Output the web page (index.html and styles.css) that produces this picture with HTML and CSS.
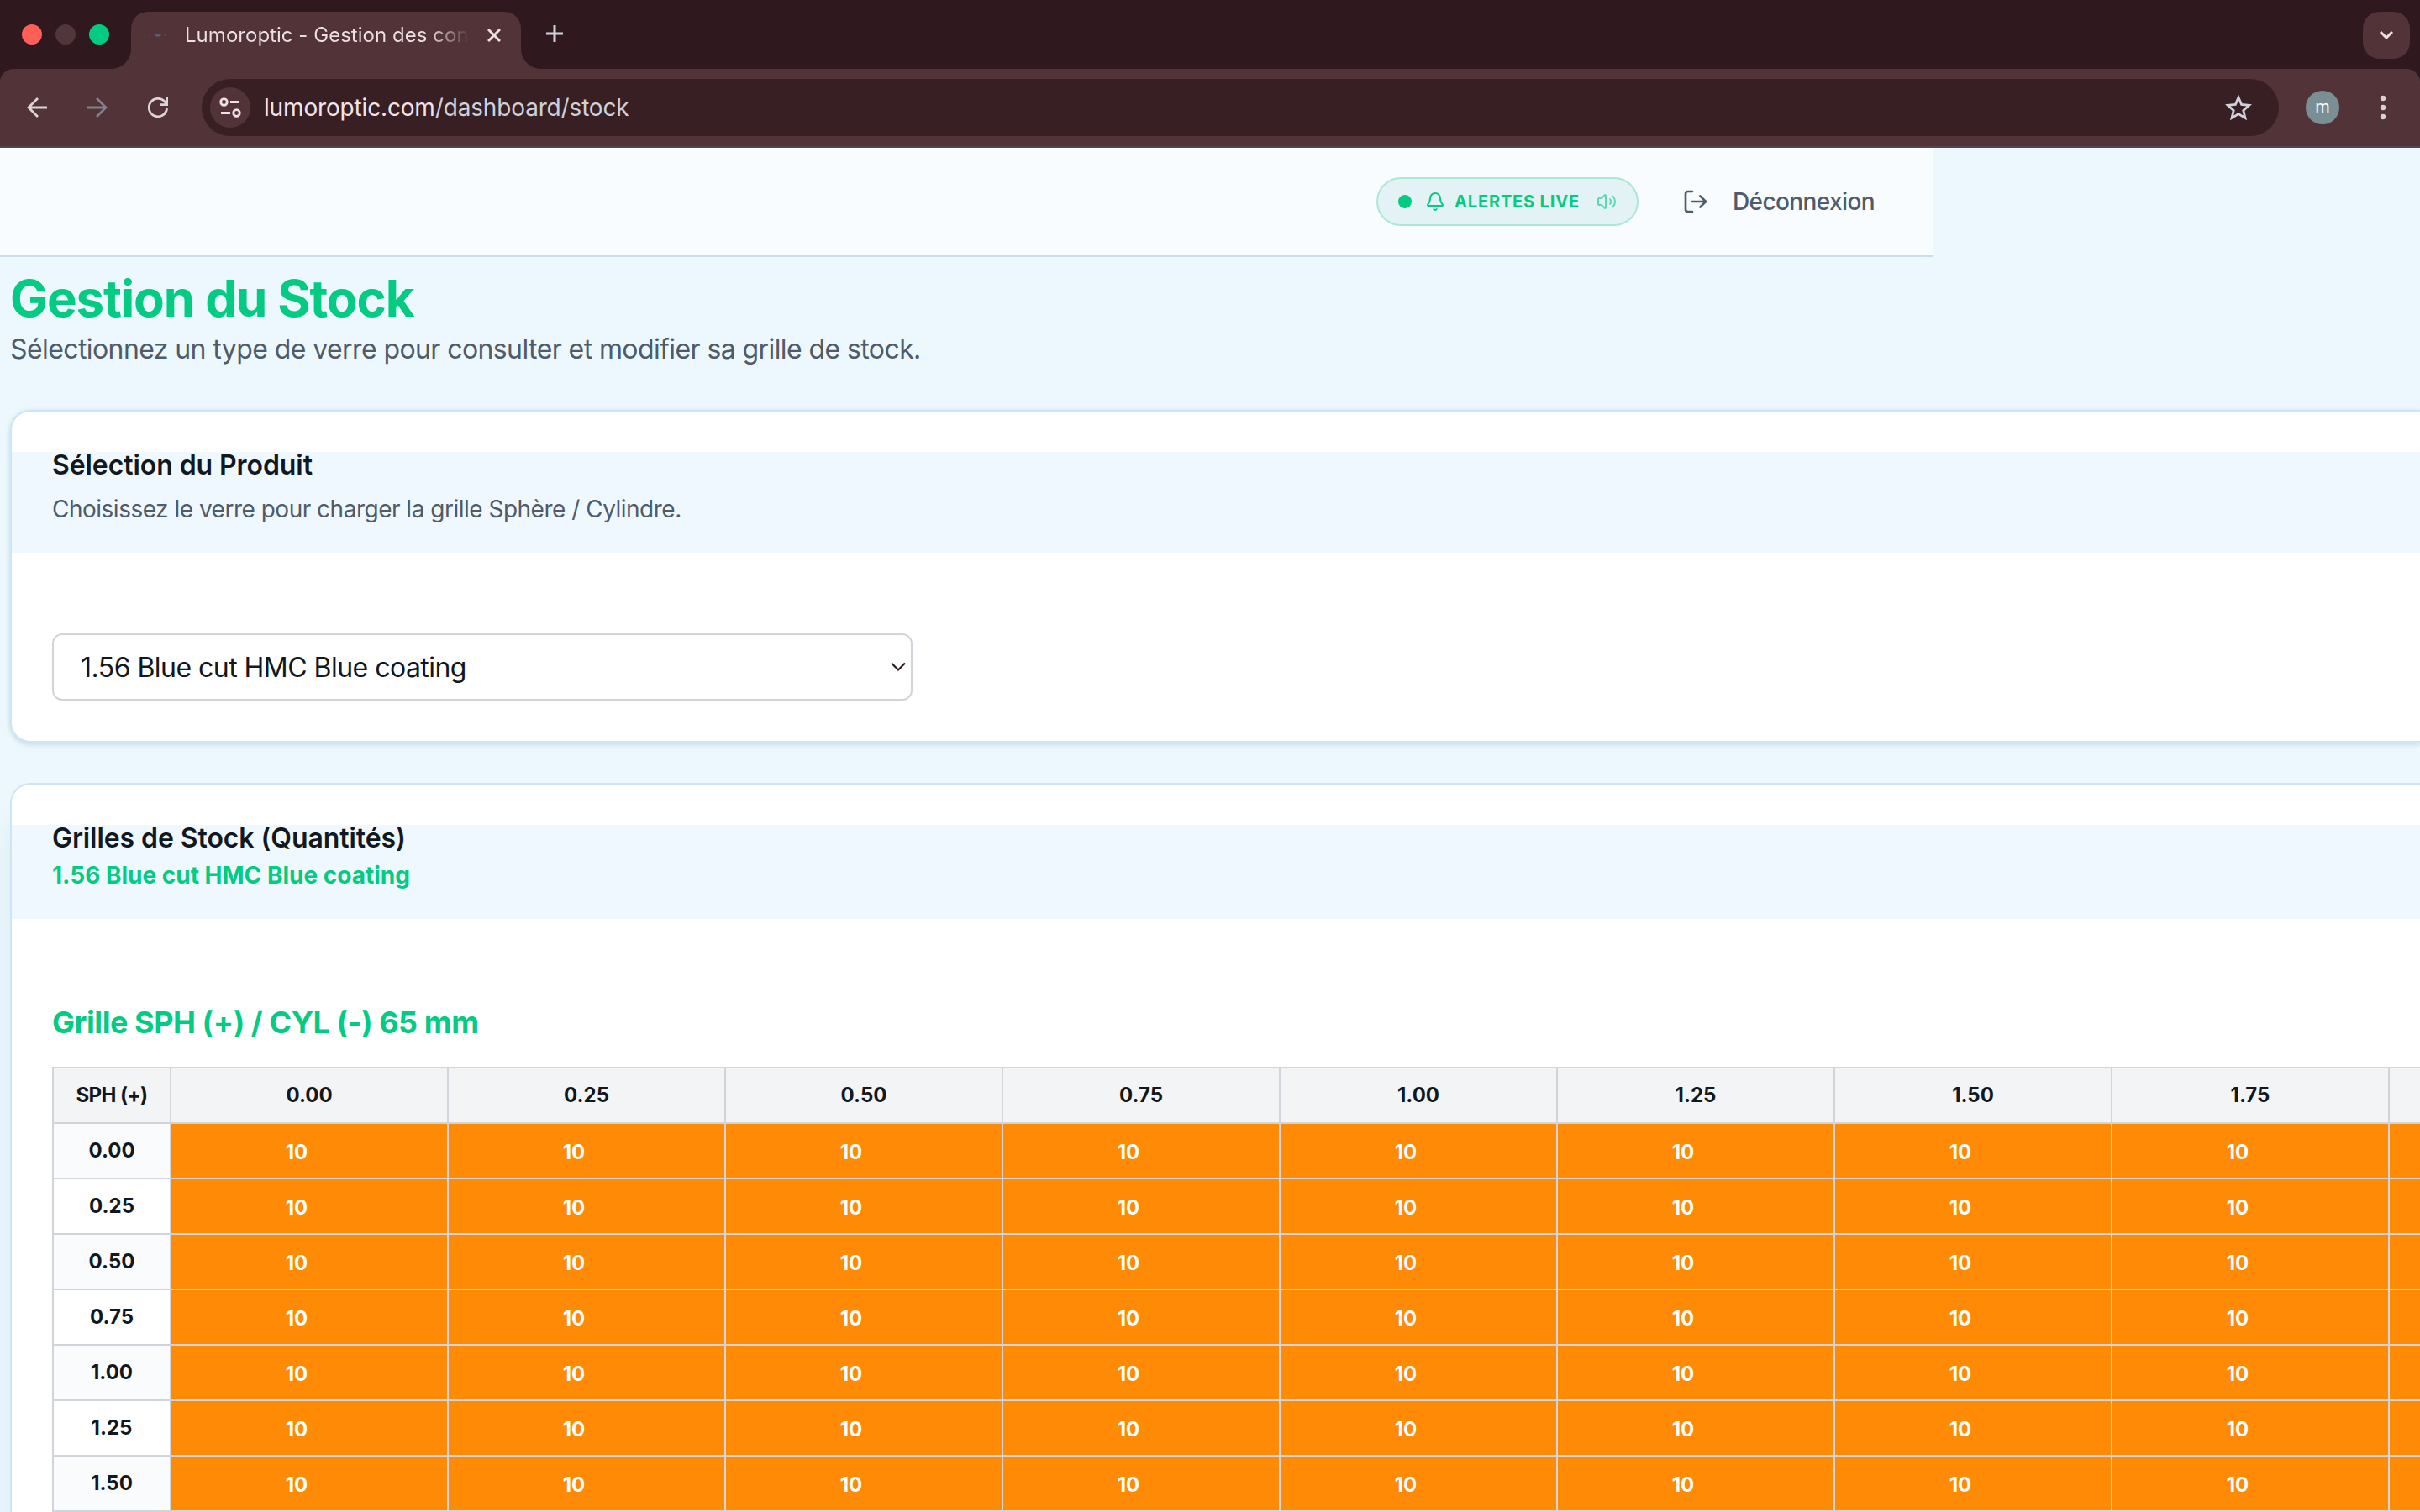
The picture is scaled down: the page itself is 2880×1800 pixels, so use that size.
FILE: index.html
```html
<!DOCTYPE html>
<html lang="fr">
<head>
    <meta charset="UTF-8">
    <meta name="viewport" content="width=device-width, initial-scale=1.0">
    <title>Lumoroptic - Gestion des commandes</title>
    <link rel="stylesheet" href="styles.css">
</head>
<body>
    <div class="browser">
        <div class="tab-strip">
            <div class="lights">
                <span class="light red"></span>
                <span class="light grey"></span>
                <span class="light green"></span>
            </div>
            <div class="tab">
                <svg class="favicon" width="24" height="8" viewBox="0 0 24 8" fill="#55606b"><path d="M8 3h8l-1 2-3 1-3-1z"/><path d="M1 5h2M19 4h3" stroke="#55525a"/></svg>
                <span class="tab-title">Lumoroptic - Gestion des con</span>
                <svg class="tab-close" width="16" height="16" viewBox="0 0 16 16" stroke="#ece0e3" stroke-width="3"><path d="M1 1l14 14M15 1L1 15"/></svg>
            </div>
            <svg class="new-tab" width="20" height="20" viewBox="0 0 20 20" stroke="#cfd3da" stroke-width="3"><path d="M10 0v20M0 10h20"/></svg>
            <div class="tab-search">
                <svg width="16" height="10" viewBox="0 0 16 10" fill="none" stroke="#efe0e6" stroke-width="3"><path d="M1 1l7 7 7-7"/></svg>
            </div>
        </div>
        <div class="toolbar">
            <svg class="nav-icon" width="24" height="24" viewBox="0 0 24 24" fill="none" stroke="#dcd5d8" stroke-width="2.8"><path d="M24 12H2M13 1L2 12l11 11"/></svg>
            <svg class="nav-icon" width="24" height="24" viewBox="0 0 24 24" fill="none" stroke="#82818a" stroke-width="2.8"><path d="M0 12h22M11 1l11 11-11 11"/></svg>
            <svg class="nav-icon" width="24" height="24" viewBox="0 0 24 24" fill="none" stroke="#dcd5d8" stroke-width="2.8"><path d="M22.6 13A10.7 10.7 0 1 1 20 5l2 3M22.7 0v8.7H14"/></svg>
            <div class="omnibox">
                <div class="site-info">
                    <svg width="26" height="24" viewBox="0 0 26 24" fill="none" stroke="#efe0e6" stroke-width="2.8"><circle cx="5.5" cy="5.5" r="3.8"/><path d="M13 5.5h11M2 18.5h11"/><circle cx="20.5" cy="18.5" r="3.8"/></svg>
                </div>
                <div class="url">lumoroptic.com<span class="url-path">/dashboard/stock</span></div>
                <svg class="star" width="32" height="30" viewBox="0 0 32 30" fill="none" stroke="#cfd3da" stroke-width="2.8"><path d="M16 3l3.6 8.5 9.2.8-7 6.1 2.1 9L16 22.6l-7.9 4.8 2.1-9-7-6.1 9.2-.8z"/></svg>
            </div>
            <div class="avatar">m</div>
            <svg class="menu" width="8" height="30" viewBox="0 0 8 30" fill="#d8d2d5"><circle cx="4" cy="4" r="3.2"/><circle cx="4" cy="15" r="3.2"/><circle cx="4" cy="26" r="3.2"/></svg>
        </div>
    </div>

    <header class="topbar">
        <div class="live">
            <span class="live-dot"></span>
            <svg class="bell" width="24" height="24" viewBox="0 0 24 24" fill="none" stroke="currentColor" stroke-width="2" stroke-linecap="round" stroke-linejoin="round"><path d="M10.268 21a2 2 0 0 0 3.464 0"/><path d="M3.262 15.326A1 1 0 0 0 4 17h16a1 1 0 0 0 .74-1.673C19.41 13.956 18 12.499 18 8A6 6 0 0 0 6 8c0 4.499-1.411 5.956-2.738 7.326"/></svg>
            <span class="live-text">ALERTES LIVE</span>
            <svg class="volume" width="24" height="24" viewBox="0 0 24 24" fill="none" stroke="currentColor" stroke-width="2" stroke-linecap="round" stroke-linejoin="round"><path d="M11 4.702a.705.705 0 0 0-1.203-.498L6.413 7.587A1.4 1.4 0 0 1 5.416 8H3a1 1 0 0 0-1 1v6a1 1 0 0 0 1 1h2.416a1.4 1.4 0 0 1 .997.413l3.383 3.384A.705.705 0 0 0 11 19.298z"/><path d="M16 9a5 5 0 0 1 0 6"/><path d="M19.364 18.364a9 9 0 0 0 0-12.728"/></svg>
        </div>
        <a class="logout" href="#">
            <svg width="32" height="32" viewBox="0 0 24 24" fill="none" stroke="currentColor" stroke-width="2" stroke-linecap="round" stroke-linejoin="round"><path d="M9 21H5a2 2 0 0 1-2-2V5a2 2 0 0 1 2-2h4"/><path d="M16 17l5-5-5-5"/><path d="M21 12H9"/></svg>
            Déconnexion
        </a>
    </header>

    <main class="content">
        <h1>Gestion du Stock</h1>
        <p class="subtitle">Sélectionnez un type de verre pour consulter et modifier sa grille de stock.</p>

        <section class="card">
            <div class="card-header">
                <h2>Sélection du Produit</h2>
                <p class="card-desc">Choisissez le verre pour charger la grille Sphère / Cylindre.</p>
            </div>
            <div class="card-body">
                <div class="select-box">
                    <span>1.56 Blue cut HMC Blue coating</span>
                    <svg width="18" height="12" viewBox="0 0 18 12" fill="none" stroke="#2b1a1f" stroke-width="2.2"><path d="M1 1.5l8 8 8-8"/></svg>
                </div>
            </div>
        </section>

        <section class="card stock-card">
            <div class="card-header">
                <h2>Grilles de Stock (Quantités)</h2>
                <p class="card-product">1.56 Blue cut HMC Blue coating</p>
            </div>
            <div class="card-body">
                <h3>Grille SPH (+) / CYL (-) 65 mm</h3>
                <table class="grid">
                    <thead>
                        <tr id="cylRow"><th class="sph">SPH (+)</th></tr>
                    </thead>
                    <tbody id="stockRows"></tbody>
                </table>
            </div>
        </section>
    </main>

    <script>
        const cyls = ['0.00', '0.25', '0.50', '0.75', '1.00', '1.25', '1.50', '1.75'];
        const sphs = ['0.00', '0.25', '0.50', '0.75', '1.00', '1.25', '1.50'];

        // the last, narrow column has no value
        document.getElementById('cylRow').innerHTML +=
            cyls.map(c => '<th class="cyl">' + c + '</th>').join('') + '<th class="more"></th>';
        document.getElementById('stockRows').innerHTML = sphs.map(s =>
            '<tr><th>' + s + '</th>' + cyls.map(() => '<td>10</td>').join('') + '<td class="more"></td></tr>'
        ).join('');
    </script>
</body>
</html>
```
FILE: styles.css
```css
* {
    margin: 0;
    padding: 0;
    box-sizing: border-box;
}

body {
    font-family: Inter, 'Liberation Sans', sans-serif;
    background: #ecf8fe;
    color: #111820;
    height: 1800px;
    overflow: hidden;
}

svg {
    display: block;
    flex-shrink: 0;
}

/* Browser window */
.browser {
    background: #2f191e;
    height: 176px;
}

.tab-strip {
    display: flex;
    height: 82px;
    padding: 14px 12px 0 26px;
}

.lights {
    display: flex;
    gap: 16px;
    width: 130px;
    padding-top: 15px;
}

.light {
    width: 24px;
    height: 24px;
    border-radius: 50%;
}

.red { background: #ff5f57; }
.grey { background: #51363b; }
.green { background: #04cb82; }

.tab {
    position: relative;
    display: flex;
    align-items: center;
    width: 464px;
    height: 68px;
    padding: 0 24px 12px 20px;
    background: #513338;
    border-radius: 20px 20px 0 0;
}

.tab::before,
.tab::after {
    content: '';
    position: absolute;
    bottom: 0;
    width: 24px;
    height: 24px;
}

.tab::before {
    left: -24px;
    background: radial-gradient(circle at 0 0, transparent 23.5px, #513338 24.5px);
}

.tab::after {
    right: -24px;
    background: radial-gradient(circle at 100% 0, transparent 23.5px, #513338 24.5px);
}

.tab-title {
    width: 336px;
    margin-left: 20px;
    overflow: hidden;
    white-space: nowrap;
    font-size: 24px;
    line-height: 32px;
    letter-spacing: 0.03px;
    background: linear-gradient(90deg, #ece0e3 86%, #513338 101%);
    -webkit-background-clip: text;
    background-clip: text;
    color: transparent;
}

.tab-close {
    margin-left: auto;
}

.new-tab {
    margin: 16px 0 0 30px;
}

.tab-search {
    display: flex;
    align-items: center;
    justify-content: center;
    width: 56px;
    height: 56px;
    margin-left: auto;
    background: #513338;
    border-radius: 20px;
}

.toolbar {
    display: flex;
    align-items: center;
    height: 94px;
    padding: 0 40px 0 32px;
    background: #513338;
    border-bottom: 2px solid #564548;
    border-radius: 16px 16px 0 0;
}

.nav-icon {
    margin-right: 48px;
}

.omnibox {
    display: flex;
    align-items: center;
    width: 2472px;
    height: 68px;
    margin-left: -8px;
    padding: 0 32px 0 10px;
    background: #381f23;
    border-radius: 34px;
}

.site-info {
    display: flex;
    align-items: center;
    justify-content: center;
    width: 48px;
    height: 48px;
    border-radius: 50%;
    background: #513338;
}

.url {
    margin-left: 16px;
    font-size: 28px;
    letter-spacing: -0.16px;
    color: #f2e3e7;
}

.url-path {
    color: #cdd2da;
}

.star {
    margin-left: auto;
}

.avatar {
    width: 40px;
    height: 40px;
    margin-left: 32px;
    border-radius: 50%;
    background: #7a8f93;
    color: #fff;
    font-size: 20px;
    line-height: 38px;
    text-align: center;
}

.menu {
    margin-left: auto;
}

/* Page header */
.topbar {
    display: flex;
    align-items: center;
    justify-content: flex-end;
    width: 2300px;
    height: 130px;
    padding-right: 68px;
    background: #f9fcff;
    border-bottom: 2px solid #cbdcec;
}

.live {
    display: flex;
    align-items: center;
    width: 312px;
    height: 58px;
    padding: 0 24px;
    border: 2px solid #a9e8d6;
    border-radius: 29px;
    background: #e2f2f5;
    color: #04cb82;
}

.live-dot {
    width: 16px;
    height: 16px;
    border-radius: 50%;
    background: #04cb82;
}

.bell {
    margin: 0 11px 0 16px;
}

.live-text {
    font-size: 20px;
    font-weight: 700;
    letter-spacing: 0.84px;
    white-space: nowrap;
}

.volume {
    margin-left: auto;
    opacity: 0.6;
}

.logout {
    display: flex;
    align-items: center;
    gap: 28px;
    width: 230px;
    margin-left: 52px;
    font-size: 28px;
    font-weight: 500;
    letter-spacing: -0.6px;
    color: #4d5b6b;
    text-decoration: none;
}

/* Stock page */
.content {
    padding: 13px 0 0 12px;
}

h1 {
    font-size: 60px;
    line-height: 72px;
    letter-spacing: -1.1px;
    color: #04cb82;
}

.subtitle {
    padding-top: 1px;
    margin-bottom: 48px;
    font-size: 32px;
    line-height: 48px;
    letter-spacing: -0.59px;
    color: #4f5b69;
}

/* Cards run off to the right of the window */
.card {
    margin-bottom: 48px;
    padding: 48px 0;
    background: #fff;
    border: 2px solid #cfe5f7;
    border-right: none;
    border-radius: 24px 0 0 24px;
    box-shadow: 0 2px 6px rgba(30, 80, 100, 0.2);
}

.stock-card {
    margin-bottom: 0;
    padding-bottom: 0;
    border-bottom: none;
    border-bottom-left-radius: 0;
    box-shadow: 0 40px 30px rgba(30, 120, 110, 0.09);
}

.card-header {
    padding: 0 48px 32px;
    background: #f0f8ff;
}

h2 {
    font-size: 32px;
    font-weight: 600;
    line-height: 32px;
    letter-spacing: -0.08px;
}

.card-desc {
    padding-top: 1px;
    margin-top: 15px;
    font-size: 28px;
    line-height: 40px;
    letter-spacing: -0.5px;
    color: #4f5b69;
}

.card-product {
    margin-top: 8px;
    font-size: 28px;
    font-weight: 700;
    line-height: 40px;
    color: #04cb82;
}

.card-body {
    padding: 96px 0 0 48px;
}

.select-box {
    display: flex;
    align-items: center;
    justify-content: space-between;
    width: 1024px;
    height: 80px;
    padding: 0 6px 0 32px;
    border: 2px solid #d1d5db;
    border-radius: 12px;
    font-size: 32px;
    letter-spacing: -0.53px;
}

h3 {
    margin-bottom: 26px;
    font-size: 36px;
    line-height: 54px;
    letter-spacing: -0.45px;
    color: #04cb82;
}

.grid {
    width: 2818px;
    table-layout: fixed;
    border-collapse: collapse;
    font-size: 24px;
    line-height: 32px;
}

.grid tr {
    height: 66px;
}

.grid th,
.grid td {
    border: 2px solid #d1d5db;
    text-align: center;
    font-weight: 700;
}

.grid thead th {
    background: #f3f4f6;
}

.grid .sph {
    width: 140px;
    letter-spacing: -0.6px;
}

.grid .cyl {
    width: 330px;
}

.grid tbody tr:nth-child(odd) th {
    background: #f9fbfd;
}

.grid td {
    padding: 3px 30px 0 0;
    background: #ff8a05;
    color: #fff;
}

.grid .more {
    padding: 0;
    border-right: none;
}
```
